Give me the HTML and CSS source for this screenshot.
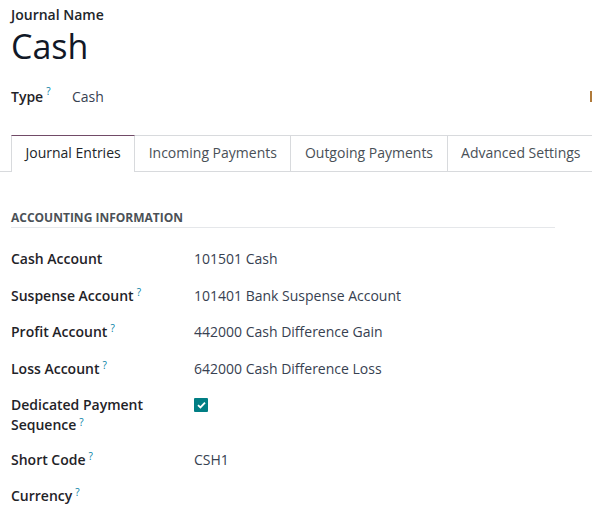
FILE: index.html
```html
<!DOCTYPE html>
<html>
<head>
<meta charset="utf-8">
<link rel="stylesheet" href="styles.css">
</head>
<body>
<div class="sheet">
  <div class="title-block">
    <div class="title-label">Journal Name</div>
    <h1 class="title">Cash</h1>
  </div>
  <div class="type-row">
    <span class="label">Type<sup class="help">?</sup></span>
    <span class="type-value">Cash</span>
    <span class="edge-mark"></span>
  </div>
  <div class="tabs">
    <div class="tab active">Journal Entries</div>
    <div class="tab">Incoming Payments</div>
    <div class="tab">Outgoing Payments</div>
    <div class="tab">Advanced Settings</div>
  </div>
  <div class="section">
    <div class="section-title">ACCOUNTING INFORMATION</div>
    <div class="fields">
      <div class="field">
        <div class="label">Cash Account</div>
        <div class="value">101501 Cash</div>
      </div>
      <div class="field">
        <div class="label">Suspense Account<sup class="help">?</sup></div>
        <div class="value">101401 Bank Suspense Account</div>
      </div>
      <div class="field">
        <div class="label">Profit Account<sup class="help">?</sup></div>
        <div class="value">442000 Cash Difference Gain</div>
      </div>
      <div class="field">
        <div class="label">Loss Account<sup class="help">?</sup></div>
        <div class="value">642000 Cash Difference Loss</div>
      </div>
      <div class="field tall">
        <div class="label">Dedicated Payment Sequence<sup class="help">?</sup></div>
        <div class="value">
          <span class="checkbox">
            <svg width="9" height="8" viewBox="0 0 9 8"><path d="M1 4.2 L3.4 6.4 L8 1.6" fill="none" stroke="#fff" stroke-width="1.8"/></svg>
          </span>
        </div>
      </div>
      <div class="field">
        <div class="label">Short Code<sup class="help">?</sup></div>
        <div class="value">CSH1</div>
      </div>
      <div class="field">
        <div class="label">Currency<sup class="help">?</sup></div>
        <div class="value"></div>
      </div>
    </div>
  </div>
</div>
</body>
</html>
```

FILE: styles.css
```css
html, body {
  margin: 0;
  padding: 0;
  background: #fff;
}
body {
  font-family: "Open Sans", "Noto Sans", sans-serif;
  font-size: 14px;
  color: #212529;
  overflow: hidden;
}
.sheet {
  padding: 0 0 0 11px;
}
.title-block {
  padding-top: 6px;
}
.title-label {
  font-weight: 600;
  font-size: 14px;
  line-height: 18px;
}
.title {
  margin: 0;
  font-weight: 400;
  font-size: 34px;
  line-height: 44px;
  color: #111827;
}
.type-row {
  display: flex;
  align-items: baseline;
  margin-top: 19px;
  position: relative;
}
.type-row .label {
  width: 61px;
}
.type-value {
  color: #374151;
}
.edge-mark {
  position: absolute;
  right: 0;
  top: 4px;
  width: 2px;
  height: 11px;
  background: #b07a3a;
}
.label {
  font-weight: 600;
  color: #1f2328;
}
.help {
  color: #0180a5;
  font-weight: 400;
  font-size: 10px;
  margin-left: 3px;
  vertical-align: top;
  position: relative;
  top: -3px;
}
.tabs {
  display: flex;
  margin-top: 29px;
  margin-left: -11px;
  padding-left: 11px;
  border-bottom: 1px solid #d8dadd;
  height: 36px;
}
.tab {
  box-sizing: border-box;
  padding: 0 13.5px;
  height: 37px;
  line-height: 34px;
  border: 1px solid #d8dadd;
  border-left: none;
  border-bottom: none;
  color: #495057;
  white-space: nowrap;
}
.tab.active {
  border-left: 1px solid #d8dadd;
  border-top: 1px solid #714b67;
  background: #fff;
  color: #212529;
}
.section {
  margin-top: 37px;
  width: 544px;
}
.section-title {
  font-weight: 700;
  font-size: 12px;
  color: #4b5157;
  line-height: 18px;
  padding-bottom: 0;
  border-bottom: 1px solid #e5e7ea;
}
.fields {
  display: flex;
  flex-direction: column;
  gap: 15.5px;
  margin-top: 20px;
}
.field {
  display: grid;
  grid-template-columns: 183px 1fr;
  line-height: 21px;
}
.field.tall {
  line-height: 20px;
  margin-top: 0.5px;
  margin-bottom: -1.5px;
}
.field .label {
  width: 150px;
}
.value {
  color: #374151;
}
.checkbox {
  display: inline-flex;
  align-items: center;
  justify-content: center;
  width: 14px;
  height: 14px;
  background: #017e84;
  border-radius: 1px;
  vertical-align: middle;
  position: relative;
  top: -1px;
}
```
